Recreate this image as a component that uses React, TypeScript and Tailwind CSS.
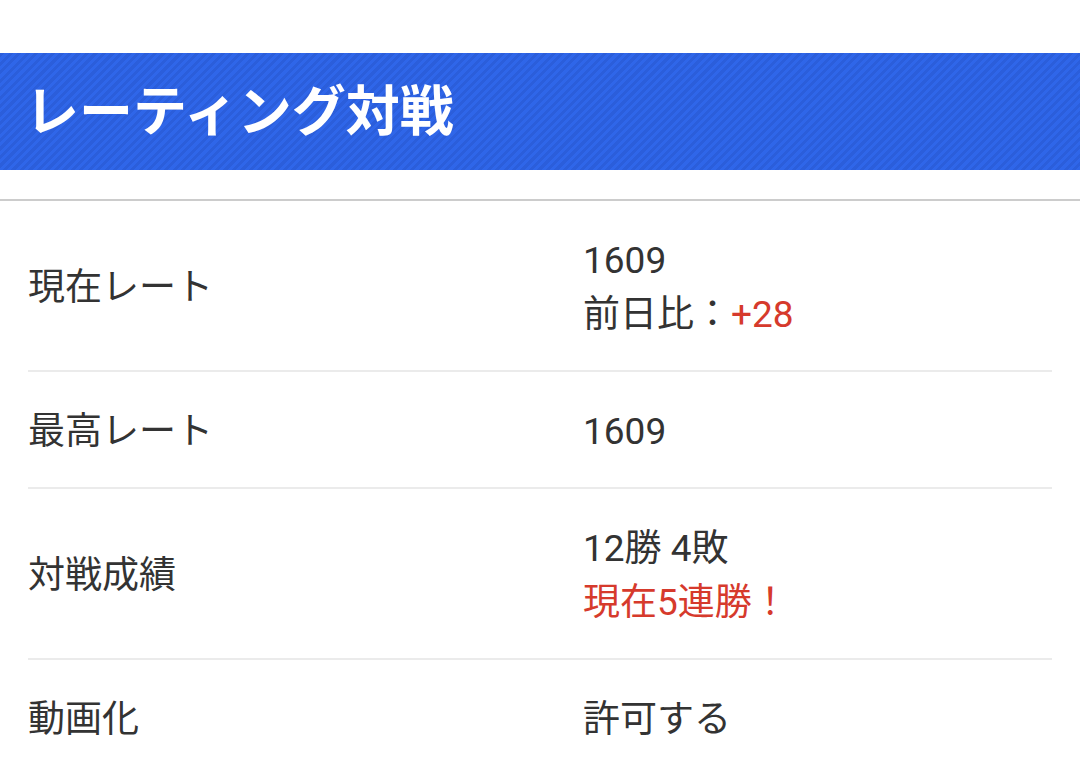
import React from 'react';

type Row = {
  label: string;
  lines: React.ReactNode[];
};

const rows: Row[] = [
  {
    label: '現在レート',
    lines: [
      '1609',
      <>
        前日比：<span className="text-[#d63a2c]">+28</span>
      </>,
    ],
  },
  { label: '最高レート', lines: ['1609'] },
  {
    label: '対戦成績',
    lines: ['12勝 4敗', <span className="text-[#d63a2c]">現在5連勝！</span>],
  },
  { label: '動画化', lines: ['許可する'] },
];

const App = () => {
  return (
    <div className="min-h-[771px] bg-white pt-[53px] font-['Roboto','Noto_Sans_CJK_JP',sans-serif] text-[#333]">
      <div className="flex h-[117px] items-center bg-[#2f66e9] bg-[repeating-linear-gradient(-45deg,#2f66e9_0px,#2f66e9_3px,#2b5edb_3px,#2b5edb_6px)] px-[25px] pt-[2px]">
        <h1 className="text-[54px] font-bold leading-none text-white">レーティング対戦</h1>
      </div>

      <div className="mt-[29px] border-t-2 border-[#cccccc]">
        {rows.map((row, i) => (
          <div
            key={row.label}
            className={`mx-[28px] flex items-center pt-[33px] pb-[28px] ${
              i < rows.length - 1 ? 'border-b-2 border-[#ebebeb]' : ''
            }`}
          >
            <div className="w-[555px] text-[37px] leading-[54px]">{row.label}</div>
            <div className="flex flex-col text-[37px] leading-[54px]">
              {row.lines.map((line, j) => (
                <div key={j}>{line}</div>
              ))}
            </div>
          </div>
        ))}
      </div>
    </div>
  );
};

export default App;
